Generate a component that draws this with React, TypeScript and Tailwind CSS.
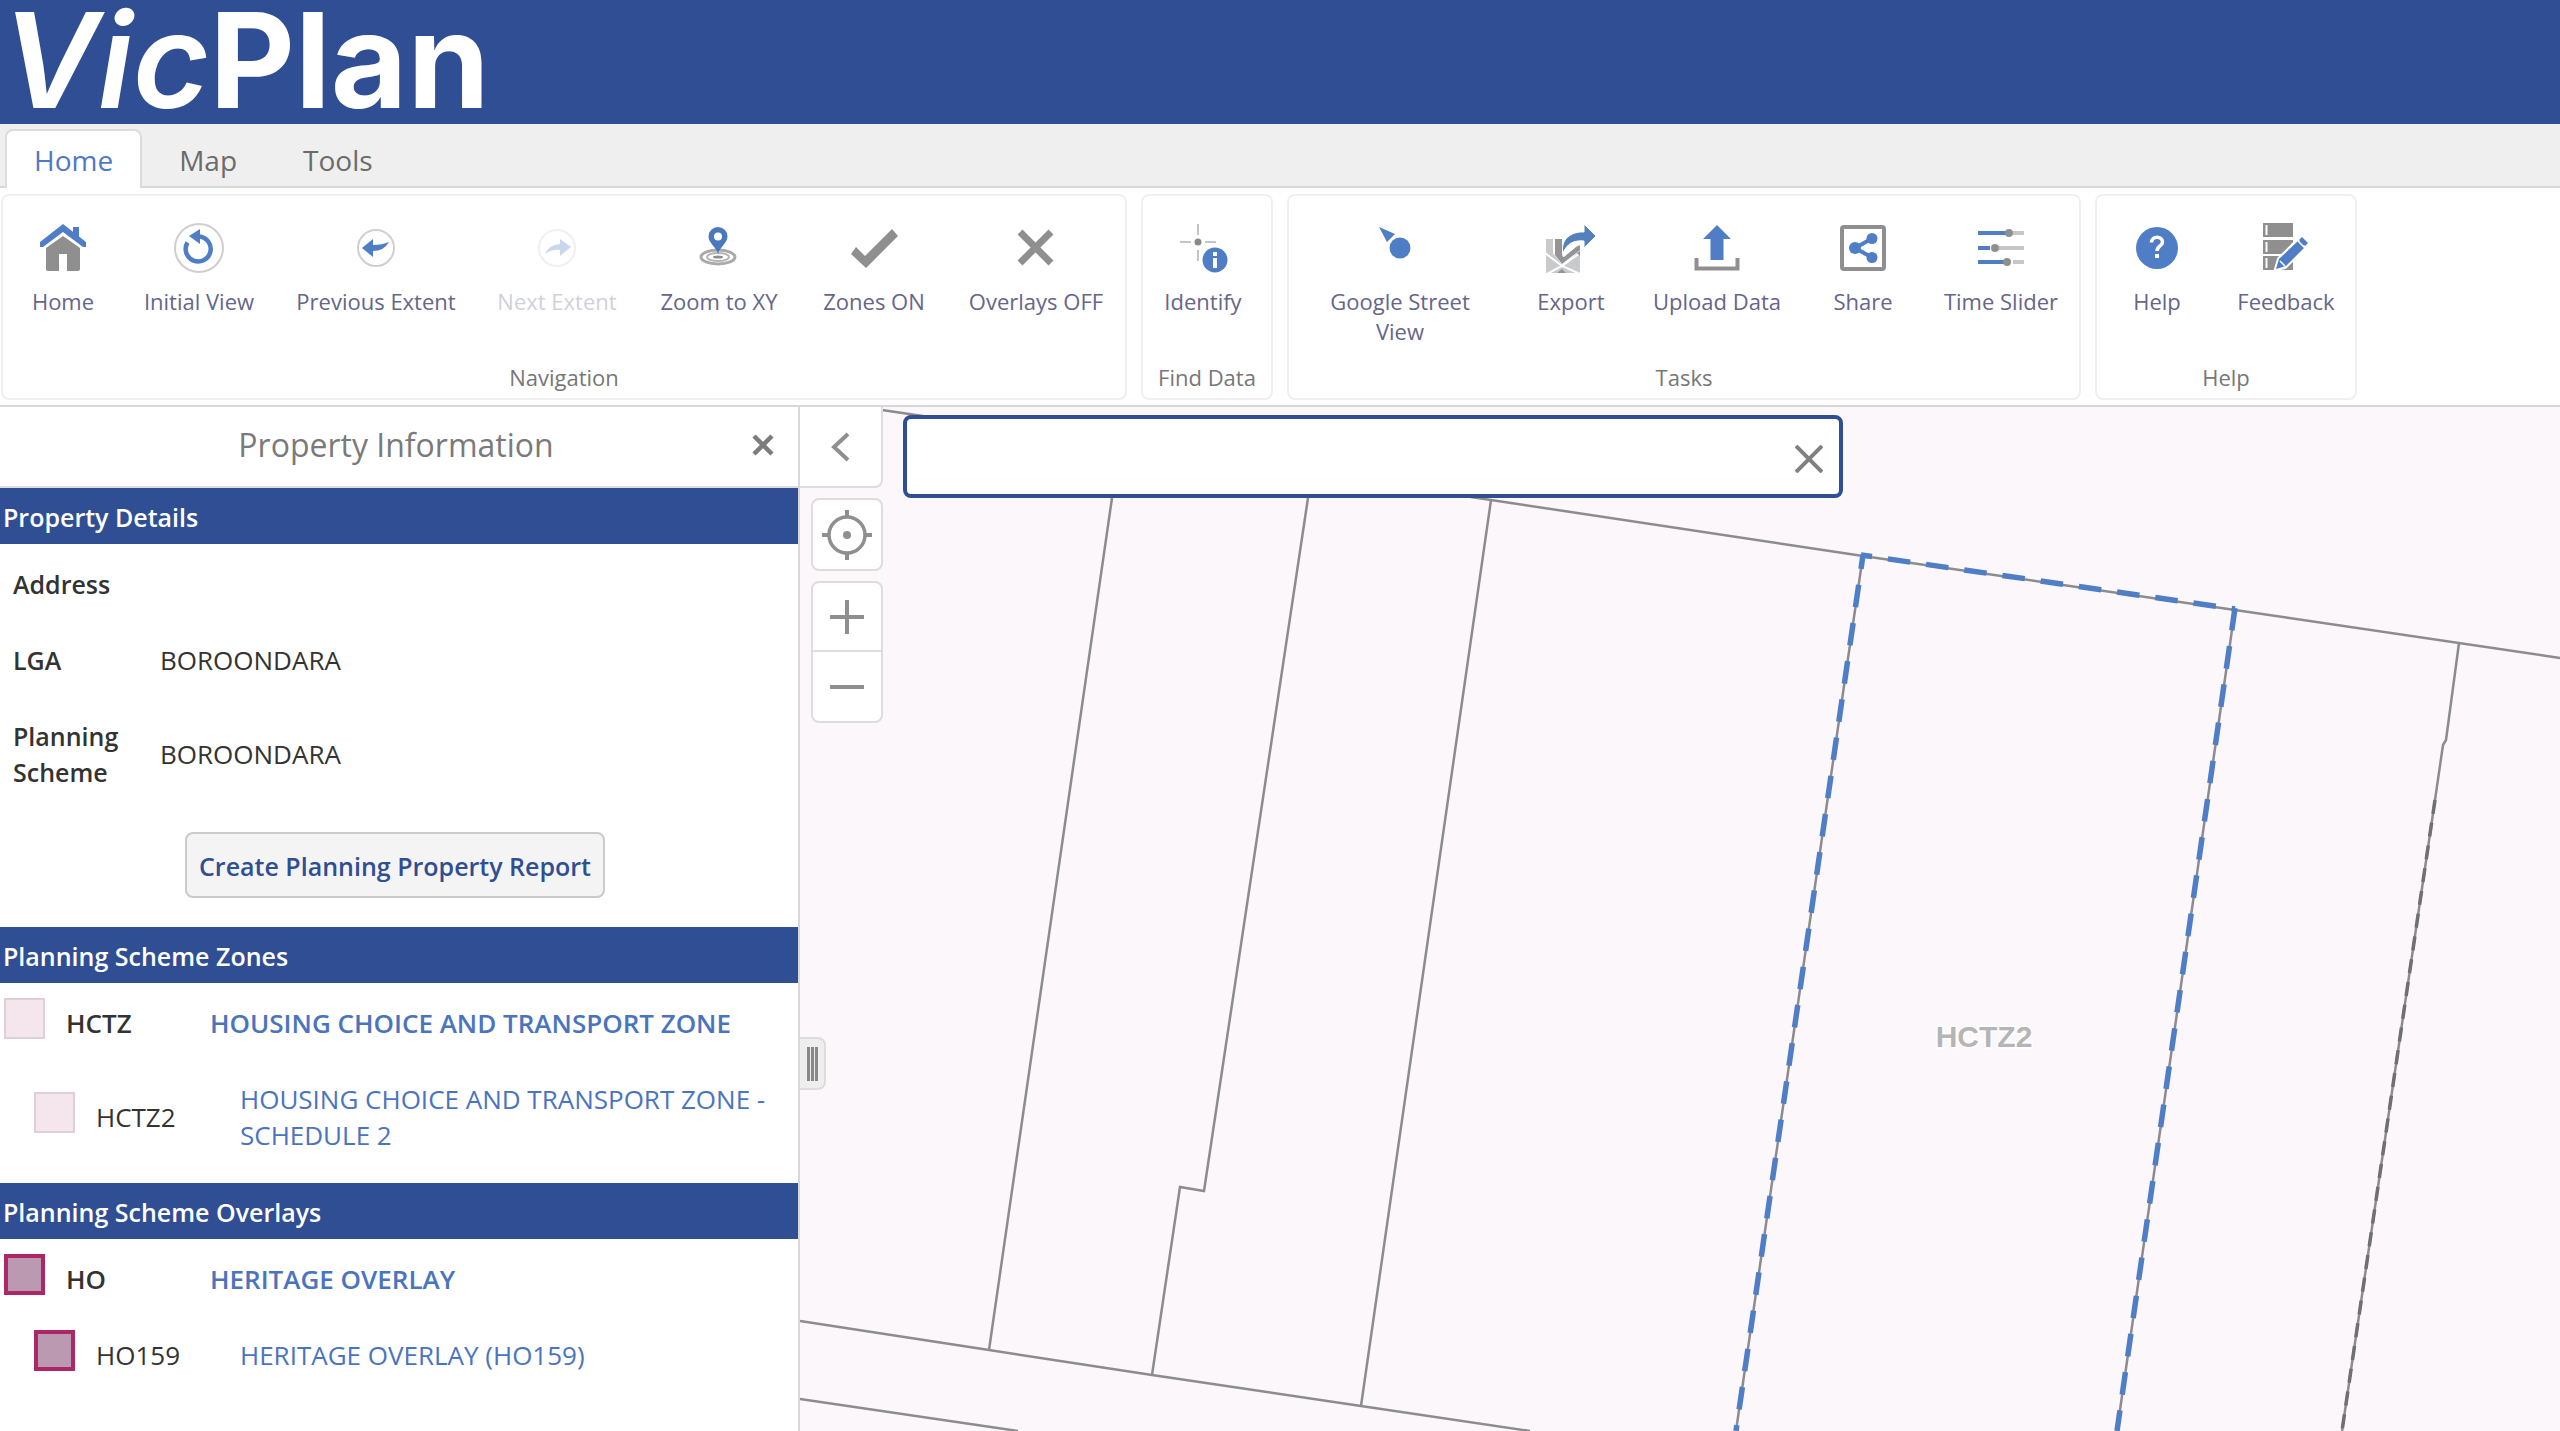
import { useState } from 'react';
import type { ReactNode } from 'react';
import clsx from 'clsx';

const BLUE = '#4f7dc6';
const GREY = '#8f8f8f';

const Icon = ({ children }: { children: ReactNode }) => (
  <svg viewBox="0 0 52 52" className="size-[52px]" fill="none" aria-hidden="true">
    {children}
  </svg>
);

const HomeIcon = () => (
  <Icon>
    <path d="M36 5h6v13l-6-5z" fill={BLUE} />
    <path d="M3 25v-5L26 2l23 18v5h-3L26 10 6 25z" fill={BLUE} />
    <path d="M26 14l17 12v21q0 2-2 2H30V32h-8v17H11q-2 0-2-2V26z" fill={GREY} />
  </Icon>
);

const InitialViewIcon = () => (
  <Icon>
    <circle cx="26" cy="26" r="24" stroke="#cfcfcf" strokeWidth="2" />
    <path d="M26 14.5a12.5 12.5 0 1 1-11.5 6" stroke={BLUE} strokeWidth="4.5" />
    <path d="M16 14l11-7v15z" fill={BLUE} />
  </Icon>
);

const PreviousIcon = () => (
  <Icon>
    <circle cx="26" cy="26" r="18" stroke="#cfcfcf" strokeWidth="2" />
    <path d="M12 26l11-9v6q9 0 16-3-5 9-16 9v6z" fill={BLUE} />
  </Icon>
);

const NextIcon = () => (
  <Icon>
    <circle cx="26" cy="26" r="18" stroke="#cfcfcf" strokeWidth="2" />
    <path d="M40 25l-11-8v5q-11 1-15 10 7-5 15-4v6z" fill={BLUE} />
  </Icon>
);

const ZoomXYIcon = () => (
  <Icon>
    <ellipse cx="25" cy="35" rx="17" ry="7" stroke="#aaa" strokeWidth="3" />
    <ellipse cx="25" cy="35" rx="11" ry="4" stroke="#b5b5b5" strokeWidth="2" />
    <ellipse cx="25" cy="35" rx="5" ry="1.5" fill={GREY} />
    <path d="M25 32c-1-6-9.5-11-9.5-17.5a9.5 9.5 0 0 1 19 0C34.5 21 26 26 25 32z" fill="#4a78bd" />
    <circle cx="25" cy="14.5" r="4" fill="#fff" />
  </Icon>
);

const CheckIcon = () => (
  <Icon>
    <path d="M44 7l6 7-32 32L3 32l5-7 9 9z" fill={GREY} />
  </Icon>
);

const CrossIcon = () => (
  <Icon>
    <path d="M10 10l31 31M41 10L10 41" stroke={GREY} strokeWidth="7" />
  </Icon>
);

const IdentifyIcon = () => (
  <Icon>
    <path d="M21 2v11M21 28v11M3 20h11M28 20h11" stroke="#c4c4c4" strokeWidth="2" />
    <circle cx="21" cy="20" r="3.5" fill="#8a8a8a" />
    <circle cx="38" cy="38" r="12.5" fill={BLUE} />
    <path d="M38 30v4M38 36v10" stroke="#fff" strokeWidth="4" />
  </Icon>
);

const StreetViewIcon = () => (
  <Icon>
    <circle cx="26" cy="26" r="10.5" fill={BLUE} />
    <path d="M5 5l16 7-8 8z" fill={BLUE} />
  </Icon>
);

const ExportIcon = () => (
  <Icon>
    <path d="M1 17h34v34H1z" fill="#c9cacc" />
    <path d="M8 16v15l10 13 17-16V16z" fill="#fff" />
    <path d="M10 17h7v14q0 4 2 4l12-10 4-2v5L17 42l-7-9z" fill="#929496" />
    <path d="M0 31l17 13 18 8M35 31L17 44 2 52" stroke="#fff" strokeWidth="2" />
    <path d="M12 51l5-4 4 4z" fill="#929496" />
    <path d="M32 31l3-2v5z" fill="#929496" />
    <path d="M39 2l12 12-12 12v-7c-11-1-17 3-21 12-3-13 8-22 21-21z" fill="#5481bd" stroke="#fff" strokeWidth="1" />
  </Icon>
);

const UploadIcon = () => (
  <Icon>
    <path d="M26 3l14 14h-7.5v21h-13V17H12z" fill={BLUE} />
    <path d="M5.5 36v10.5h41V36" stroke={GREY} strokeWidth="4" />
  </Icon>
);

const ShareIcon = () => (
  <Icon>
    <rect x="5" y="5" width="42" height="42" rx="2" stroke={GREY} strokeWidth="4" />
    <path d="M35 16.5L18 26l17 9.5" stroke={BLUE} strokeWidth="4" />
    <circle cx="18" cy="26" r="6" fill={BLUE} />
    <circle cx="35" cy="16.5" r="5.5" fill={BLUE} />
    <circle cx="35" cy="35.5" r="5.5" fill={BLUE} />
  </Icon>
);

const SliderIcon = () => (
  <Icon>
    <path d="M38 11h11M24 26h25M38 40h11" stroke="#c6c6c6" strokeWidth="4" />
    <path d="M3 11h29M3 26h12M3 40h27" stroke={BLUE} strokeWidth="4" />
    <circle cx="34" cy="11" r="4" fill={GREY} />
    <circle cx="20" cy="26" r="4" fill={GREY} />
    <circle cx="32" cy="40" r="4" fill={GREY} />
  </Icon>
);

const HelpIcon = () => (
  <Icon>
    <circle cx="26" cy="26" r="21" fill={BLUE} />
    <path d="M20.5 20.5c0-7 11-7 11-.5 0 4-5.5 4-5.5 9" stroke="#fff" strokeWidth="3.5" />
    <path d="M24 32h4v4h-4z" fill="#fff" />
  </Icon>
);

const FeedbackIcon = () => (
  <Icon>
    <path d="M3 1h30v14H3zM3 18h30v14H3zM3 34h30v14H3z" fill={GREY} />
    <path d="M6.5 3v10M6.5 20v10M6.5 36v10" stroke="#fff" strokeWidth="2" />
    <path d="M16 47l3-10 19-19 4-3 6 6-4 5-19 19z" fill={BLUE} stroke="#fff" strokeWidth="4" />
    <path d="M16 47l3-10 19-18 6 7-18 18z" fill={BLUE} />
    <path d="M39 18l3-3 6 6-3 3z" fill={BLUE} />
    <path d="M38 19l7 7M20 39l5 5" stroke="#fff" strokeWidth="1.5" />
  </Icon>
);

interface Tool {
  label: string;
  icon: ReactNode;
  width: string;
  disabled?: boolean;
}

interface ToolGroup {
  title: string;
  className?: string;
  tools: Tool[];
}

const groups: ToolGroup[] = [
  {
    title: 'Navigation',
    tools: [
      { label: 'Home', icon: <HomeIcon />, width: 'w-[120px]' },
      { label: 'Initial View', icon: <InitialViewIcon />, width: 'w-[152px]' },
      { label: 'Previous Extent', icon: <PreviousIcon />, width: 'w-[202px]' },
      { label: 'Next Extent', icon: <NextIcon />, width: 'w-[160px]', disabled: true },
      { label: 'Zoom to XY', icon: <ZoomXYIcon />, width: 'w-[164px]' },
      { label: 'Zones ON', icon: <CheckIcon />, width: 'w-[146px]' },
      { label: 'Overlays OFF', icon: <CrossIcon />, width: 'w-[178px]' },
    ],
  },
  {
    title: 'Find Data',
    className: 'w-[132px]',
    tools: [{ label: 'Identify', icon: <IdentifyIcon />, width: 'w-[120px]' }],
  },
  {
    title: 'Tasks',
    tools: [
      { label: 'Google Street View', icon: <StreetViewIcon />, width: 'w-[222px]' },
      { label: 'Export', icon: <ExportIcon />, width: 'w-[120px]' },
      { label: 'Upload Data', icon: <UploadIcon />, width: 'w-[172px]' },
      { label: 'Share', icon: <ShareIcon />, width: 'w-[120px]' },
      { label: 'Time Slider', icon: <SliderIcon />, width: 'w-[156px]' },
    ],
  },
  {
    title: 'Help',
    tools: [
      { label: 'Help', icon: <HelpIcon />, width: 'w-[120px]' },
      { label: 'Feedback', icon: <FeedbackIcon />, width: 'w-[138px]' },
    ],
  },
];

const details = [
  { label: 'Address', value: '', height: 'h-[76px]' },
  { label: 'LGA', value: 'BOROONDARA', height: 'h-[76px]' },
  { label: 'Planning Scheme', value: 'BOROONDARA', height: 'h-[112px]' },
];

const zones = [
  { code: 'HCTZ', name: 'HOUSING CHOICE AND TRANSPORT ZONE' },
  { code: 'HCTZ2', name: 'HOUSING CHOICE AND TRANSPORT ZONE - SCHEDULE 2', child: true },
];

const overlays = [
  { code: 'HO', name: 'HERITAGE OVERLAY' },
  { code: 'HO159', name: 'HERITAGE OVERLAY (HO159)', child: true },
];

const Ribbon = () => (
  <div className="flex h-[219px] items-start gap-[14px] border-b-2 border-[#d8d8d8] bg-white pt-[6px] pl-px">
    {groups.map((group) => (
      <section
        key={group.title}
        className={clsx(
          'flex h-[206px] flex-col justify-between rounded-lg border-2 border-[#f0f0f0] pt-[26px] pb-[6px]',
          group.className,
        )}
      >
        <div className="flex items-start">
          {group.tools.map((tool) => (
            <button
              key={tool.label}
              type="button"
              disabled={tool.disabled}
              className={clsx(
                'flex flex-col items-center gap-3 px-4 text-[22px] leading-[30px] text-[#66658a] disabled:opacity-30',
                tool.width,
              )}
            >
              {tool.icon}
              <span>{tool.label}</span>
            </button>
          ))}
        </div>
        <h2 className="text-center text-[22px] leading-[30px] text-[#777]">{group.title}</h2>
      </section>
    ))}
  </div>
);

const SectionHeader = ({ children }: { children: ReactNode }) => (
  <h3 className="h-14 bg-[#304e94] pl-[3px] text-[25px] leading-[58px] font-semibold text-white">{children}</h3>
);

interface LegendListProps {
  items: { code: string; name: string; child?: boolean }[];
  swatch: string;
}

const LegendList = ({ items, swatch }: LegendListProps) => (
  <ul className="pt-[2px] text-[26px] leading-9">
    {items.map((item) => (
      <li key={item.code} className={clsx('flex items-center', item.child ? 'pl-[34px]' : 'pl-1 font-semibold')}>
        <span className={clsx('mb-[10px] size-[41px] shrink-0', swatch)} />
        <span className="w-[165px] shrink-0 pl-[21px] text-[#333]">{item.code}</span>
        <a href="#" className="py-5 pr-5 text-[#4a74bf]">
          {item.name}
        </a>
      </li>
    ))}
  </ul>
);

const PropertyPanel = () => (
  <aside className="w-[800px] shrink-0 border-r-2 border-[#d8d8d8] bg-white">
    <div className="flex h-[81px] items-center border-b-2 border-[#ddd] pr-5 pb-1 pl-3">
      <h1 className="flex-1 pl-8 text-center text-[32px] text-[#7a7a7a]">Property Information</h1>
      <button type="button" aria-label="Close panel" className="p-1">
        <svg viewBox="0 0 22 22" className="size-[22px]" stroke="#7c7c7c" strokeWidth="4.5">
          <path d="M2 2l18 18M20 2L2 20" />
        </svg>
      </button>
    </div>
    <SectionHeader>Property Details</SectionHeader>
    <table className="mt-[2px] w-full text-left text-[25px] leading-9 text-[#333]">
      <tbody>
        {details.map((row) => (
          <tr key={row.label} className={row.height}>
            <th scope="row" className="w-[160px] pr-6 pl-[13px] font-semibold">
              {row.label}
            </th>
            <td className="text-[26px]">{row.value}</td>
          </tr>
        ))}
      </tbody>
    </table>
    <div className="flex h-[117px] items-center justify-center pr-2 pb-2">
      <button
        type="button"
        className="h-[66px] w-[420px] rounded-lg border-2 border-[#cbcbcb] bg-[#f4f4f4] pt-1 text-[25px] font-semibold whitespace-nowrap text-[#304e94]"
      >
        Create Planning Property Report
      </button>
    </div>
    <SectionHeader>Planning Scheme Zones</SectionHeader>
    <LegendList items={zones} swatch="border-2 border-[#ddd0d8] bg-[#f4e6ec]" />
    <div className="pt-[10px]">
      <SectionHeader>Planning Scheme Overlays</SectionHeader>
    </div>
    <LegendList items={overlays} swatch="border-4 border-[#ad2766] bg-[#bb9ab1]" />
  </aside>
);

const Parcels = () => (
  <svg
    viewBox="800 407 1760 1024"
    preserveAspectRatio="xMinYMin slice"
    className="absolute inset-0 size-full"
    fill="none"
    role="img"
    aria-label="Parcel map"
  >
    <g stroke="#8c8c8c" strokeWidth="2.5">
      <path d="M882 410L1491 500L1863 556L2235 610L2560 658" />
      <path d="M800 1321L989 1350L1152 1375L1361 1406L1530 1431M800 1399L1018 1431" />
      <path d="M1112 498L989 1350M1308 498L1204 1191L1180 1187L1152 1375M1491 500L1361 1406" />
      <path d="M1863 555L1736 1431M2235 609L2117 1431" />
      <path d="M2459 643L2446 740L2443 745L2435 800L2342 1431" />
    </g>
    <path d="M2435 800L2342 1431" stroke="#707070" strokeWidth="3.5" strokeDasharray="14 9" />
    <g stroke={BLUE} strokeWidth="5.5" strokeDasharray="22.6 16">
      <path d="M1863 555L1736 1431" strokeDashoffset="8.5" />
      <path d="M1861 555L2235 609" strokeDashoffset="11.5" />
      <path d="M2235 608L2117 1431" />
    </g>
    <text
      x="1984"
      y="1047"
      textAnchor="middle"
      fill="#b5b5b5"
      stroke="#fff"
      strokeWidth="3"
      paintOrder="stroke"
      className="font-['Liberation_Sans',sans-serif] text-[30px] font-bold"
    >
      HCTZ2
    </text>
  </svg>
);

const MapView = () => {
  const [query, setQuery] = useState('');
  const mapButton = 'flex h-[69px] w-full items-center justify-center';

  return (
    <main className="relative flex flex-1 items-start overflow-hidden bg-[#fbf7fb]">
      <Parcels />
      <div className="relative flex w-[83px] flex-col items-end">
        <button
          type="button"
          aria-label="Back"
          className="mb-[10px] flex h-[81px] w-full items-center justify-center rounded-br-lg border-r-2 border-b-2 border-[#ddd] bg-white"
        >
          <svg viewBox="0 0 20 30" className="h-[30px] w-5" fill="none" stroke={GREY} strokeWidth="4">
            <path d="M17 2L3 15l14 13" />
          </svg>
        </button>
        <div className="mb-[10px] w-[72px] rounded-lg border-2 border-[#ddd] bg-white">
          <button type="button" aria-label="Find my location" className={mapButton}>
            <svg viewBox="0 0 50 50" className="size-[50px]" fill="none" stroke={GREY} strokeWidth="4">
              <circle cx="25" cy="25" r="18" strokeWidth="3.5" />
              <path d="M25 0v8M25 42v8M0 25h8M42 25h8" />
              <circle cx="25" cy="25" r="4" fill={GREY} stroke="none" />
            </svg>
          </button>
        </div>
        <div className="w-[72px] divide-y-2 divide-[#ddd] rounded-lg border-2 border-[#ddd] bg-white">
          <button type="button" aria-label="Zoom in" className={mapButton}>
            <svg viewBox="0 0 34 34" className="size-[34px]" stroke={GREY} strokeWidth="4">
              <path d="M17 0v34M0 17h34" />
            </svg>
          </button>
          <button type="button" aria-label="Zoom out" className={mapButton}>
            <svg viewBox="0 0 34 34" className="size-[34px]" stroke={GREY} strokeWidth="4">
              <path d="M0 17h34" />
            </svg>
          </button>
        </div>
      </div>
      <form
        className="relative mt-2 ml-5 flex h-[83px] w-[940px] items-center rounded-lg border-4 border-[#304e94] bg-white"
        onSubmit={(e) => e.preventDefault()}
      >
        <input
          type="text"
          aria-label="Search"
          value={query}
          onChange={(e) => setQuery(e.target.value)}
          className="h-full min-w-0 flex-1 px-4 text-[28px] outline-none"
        />
        <button type="button" aria-label="Clear search" className="px-4 pt-1" onClick={() => setQuery('')}>
          <svg viewBox="0 0 28 28" className="size-7" stroke="#808080" strokeWidth="4">
            <path d="M1 1l26 26M27 1L1 27" />
          </svg>
        </button>
      </form>
      <button
        type="button"
        aria-label="Resize panel"
        className="absolute top-[630px] left-0 flex h-[53px] w-[26px] items-center justify-center gap-px rounded-r-lg border-2 border-l-0 border-[#ddd] bg-[#eee]"
      >
        <span className="h-[34px] w-[3px] bg-[#888]" />
        <span className="h-[34px] w-[3px] bg-[#888]" />
        <span className="h-[34px] w-[3px] bg-[#888]" />
      </button>
    </main>
  );
};

const tabs = ['Home', 'Map', 'Tools'];

export default function App() {
  const [active, setActive] = useState('Home');

  return (
    <div className="flex min-h-screen flex-col bg-white font-['Open_Sans',sans-serif]">
      <header className="flex h-[124px] items-start bg-[#304e94] pl-[2px] font-['Inter',sans-serif] text-[132px] leading-[120px] text-white">
        <span className="font-semibold italic">Vic</span>
        <span className="font-bold">Plan</span>
      </header>
      <nav className="flex h-16 items-end gap-2 border-b-2 border-[#d8d8d8] bg-[#efefef] pl-[5px]">
        {tabs.map((tab) => (
          <button
            key={tab}
            type="button"
            onClick={() => setActive(tab)}
            className={clsx(
              '-mb-[2px] h-[59px] rounded-t-lg border-2 border-b-0 px-[27px] text-[28px]',
              active === tab ? 'border-[#dcdcdc] bg-white text-[#4f79c4]' : 'border-transparent text-[#6b6b6b]',
            )}
          >
            {tab}
          </button>
        ))}
      </nav>
      <Ribbon />
      <div className="flex flex-1">
        <PropertyPanel />
        <MapView />
      </div>
    </div>
  );
}
